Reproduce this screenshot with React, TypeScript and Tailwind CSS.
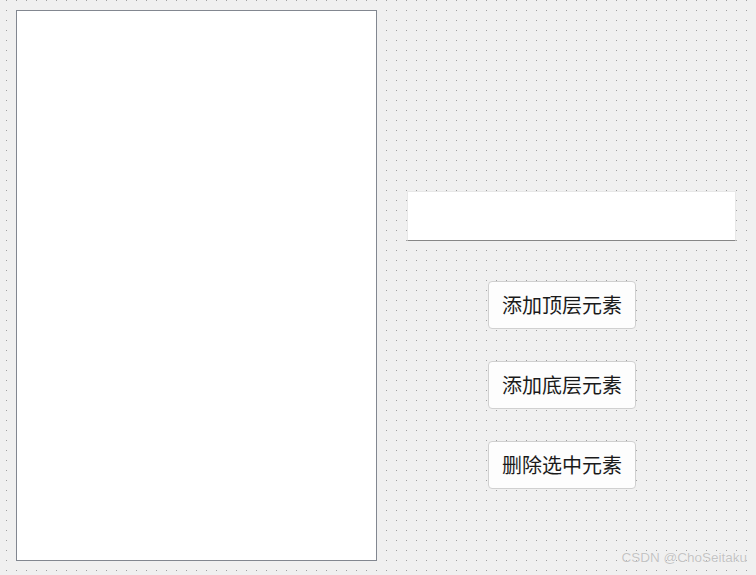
export default function App() {
  const buttons = ["添加顶层元素", "添加底层元素", "删除选中元素"];
  return (
    <div className="relative flex h-[575px] w-full items-start overflow-hidden bg-[#f0f0f0] bg-[conic-gradient(from_270deg_at_1px_1px,#a0a0a0_90deg,transparent_0)] bg-[size:10px_10px] bg-[position:6px_0px] pl-[16px] pt-[10px]">
      <div className="h-[551px] w-[361px] shrink-0 border border-[#828790] bg-white" />
      <div className="ml-[30px] flex flex-col pt-[181px]">
        <div className="h-[50px] w-[329px] border border-[#e8e8e8] border-b-[#868686] bg-white" />
        <div className="ml-[81px] mt-[40px] flex flex-col gap-[32px]">
          {buttons.map((b) => (
            <button
              key={b}
              className="h-[48px] w-[148px] rounded-[4px] border border-[#d0d0d0] bg-[#fdfdfd] font-['Noto_Sans_CJK_SC',sans-serif] text-[20px] text-[#1a1a1a]"
            >
              {b}
            </button>
          ))}
        </div>
      </div>
      <div className="absolute bottom-[7px] right-[9px] font-['Liberation_Sans',sans-serif] text-[13.5px] text-[#c4c4c4] [text-shadow:0_0_1px_#fff]">
        CSDN @ChoSeitaku
      </div>
    </div>
  );
}
